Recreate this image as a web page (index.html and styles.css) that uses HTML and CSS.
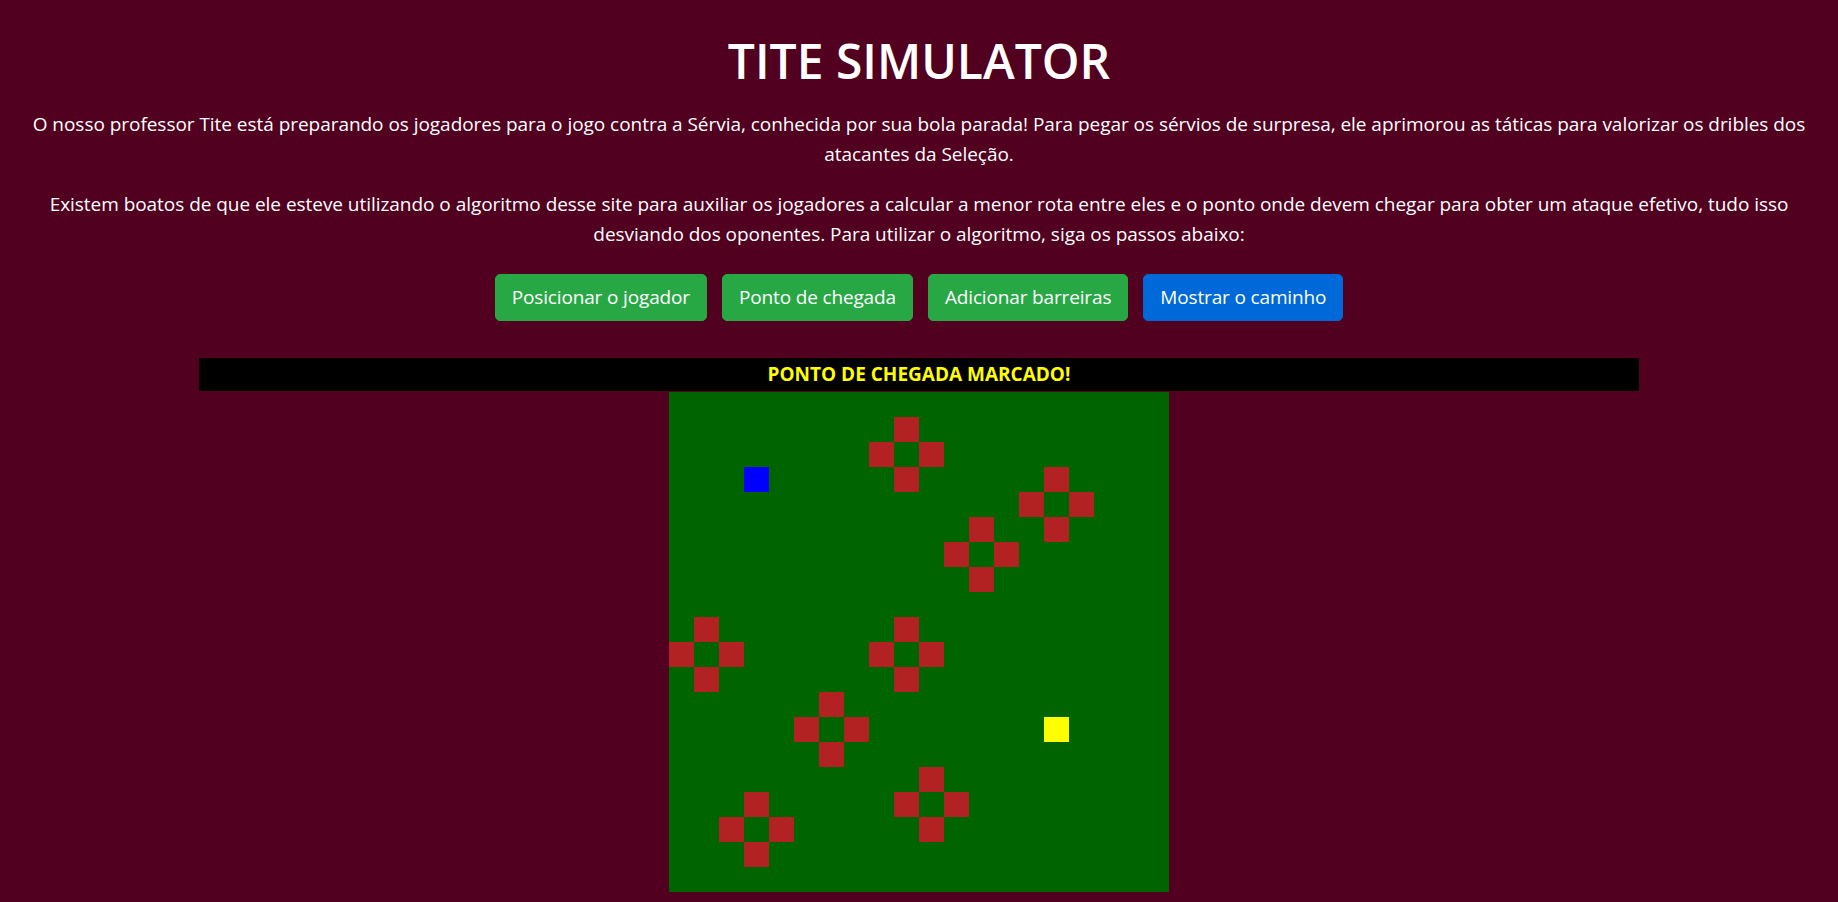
FILE: index.html
```html
<!DOCTYPE html>
<html lang="pt-BR">
<head>
<meta charset="utf-8">
<title>Tite Simulator</title>
<link rel="stylesheet" href="styles.css">
</head>
<body>
<main class="page">
  <h1 class="title">TITE SIMULATOR</h1>
  <p class="intro">O nosso professor Tite está preparando os jogadores para o jogo contra a Sérvia, conhecida por sua bola parada! Para pegar os sérvios de surpresa, ele aprimorou as táticas para valorizar os dribles dos atacantes da Seleção.</p>
  <p class="intro intro-last">Existem boatos de que ele esteve utilizando o algoritmo desse site para auxiliar os jogadores a calcular a menor rota entre eles e o ponto onde devem chegar para obter um ataque efetivo, tudo isso desviando dos oponentes. Para utilizar o algoritmo, siga os passos abaixo:</p>
  <div class="actions">
    <button class="btn btn-green" type="button">Posicionar o jogador</button>
    <button class="btn btn-green" type="button">Ponto de chegada</button>
    <button class="btn btn-green" type="button">Adicionar barreiras</button>
    <button class="btn btn-blue" type="button">Mostrar o caminho</button>
  </div>
  <div class="status">PONTO DE CHEGADA MARCADO!</div>
  <div class="board">
<i></i><i></i><i></i><i></i><i></i><i></i><i></i><i></i><i></i><i></i><i></i><i></i><i></i><i></i><i></i><i></i><i></i><i></i><i></i><i></i>
<i></i><i></i><i></i><i></i><i></i><i></i><i></i><i></i><i></i><i class="w"></i><i></i><i></i><i></i><i></i><i></i><i></i><i></i><i></i><i></i><i></i>
<i></i><i></i><i></i><i></i><i></i><i></i><i></i><i></i><i class="w"></i><i></i><i class="w"></i><i></i><i></i><i></i><i></i><i></i><i></i><i></i><i></i><i></i>
<i></i><i></i><i></i><i class="p"></i><i></i><i></i><i></i><i></i><i></i><i class="w"></i><i></i><i></i><i></i><i></i><i></i><i class="w"></i><i></i><i></i><i></i><i></i>
<i></i><i></i><i></i><i></i><i></i><i></i><i></i><i></i><i></i><i></i><i></i><i></i><i></i><i></i><i class="w"></i><i></i><i class="w"></i><i></i><i></i><i></i>
<i></i><i></i><i></i><i></i><i></i><i></i><i></i><i></i><i></i><i></i><i></i><i></i><i class="w"></i><i></i><i></i><i class="w"></i><i></i><i></i><i></i><i></i>
<i></i><i></i><i></i><i></i><i></i><i></i><i></i><i></i><i></i><i></i><i></i><i class="w"></i><i></i><i class="w"></i><i></i><i></i><i></i><i></i><i></i><i></i>
<i></i><i></i><i></i><i></i><i></i><i></i><i></i><i></i><i></i><i></i><i></i><i></i><i class="w"></i><i></i><i></i><i></i><i></i><i></i><i></i><i></i>
<i></i><i></i><i></i><i></i><i></i><i></i><i></i><i></i><i></i><i></i><i></i><i></i><i></i><i></i><i></i><i></i><i></i><i></i><i></i><i></i>
<i></i><i class="w"></i><i></i><i></i><i></i><i></i><i></i><i></i><i></i><i class="w"></i><i></i><i></i><i></i><i></i><i></i><i></i><i></i><i></i><i></i><i></i>
<i class="w"></i><i></i><i class="w"></i><i></i><i></i><i></i><i></i><i></i><i class="w"></i><i></i><i class="w"></i><i></i><i></i><i></i><i></i><i></i><i></i><i></i><i></i><i></i>
<i></i><i class="w"></i><i></i><i></i><i></i><i></i><i></i><i></i><i></i><i class="w"></i><i></i><i></i><i></i><i></i><i></i><i></i><i></i><i></i><i></i><i></i>
<i></i><i></i><i></i><i></i><i></i><i></i><i class="w"></i><i></i><i></i><i></i><i></i><i></i><i></i><i></i><i></i><i></i><i></i><i></i><i></i><i></i>
<i></i><i></i><i></i><i></i><i></i><i class="w"></i><i></i><i class="w"></i><i></i><i></i><i></i><i></i><i></i><i></i><i></i><i class="g"></i><i></i><i></i><i></i><i></i>
<i></i><i></i><i></i><i></i><i></i><i></i><i class="w"></i><i></i><i></i><i></i><i></i><i></i><i></i><i></i><i></i><i></i><i></i><i></i><i></i><i></i>
<i></i><i></i><i></i><i></i><i></i><i></i><i></i><i></i><i></i><i></i><i class="w"></i><i></i><i></i><i></i><i></i><i></i><i></i><i></i><i></i><i></i>
<i></i><i></i><i></i><i class="w"></i><i></i><i></i><i></i><i></i><i></i><i class="w"></i><i></i><i class="w"></i><i></i><i></i><i></i><i></i><i></i><i></i><i></i><i></i>
<i></i><i></i><i class="w"></i><i></i><i class="w"></i><i></i><i></i><i></i><i></i><i></i><i class="w"></i><i></i><i></i><i></i><i></i><i></i><i></i><i></i><i></i><i></i>
<i></i><i></i><i></i><i class="w"></i><i></i><i></i><i></i><i></i><i></i><i></i><i></i><i></i><i></i><i></i><i></i><i></i><i></i><i></i><i></i><i></i>
<i></i><i></i><i></i><i></i><i></i><i></i><i></i><i></i><i></i><i></i><i></i><i></i><i></i><i></i><i></i><i></i><i></i><i></i><i></i><i></i>
  </div>
</main>
</body>
</html>
```

FILE: styles.css
```css
html, body {
  margin: 0;
  padding: 0;
}

body {
  background: #52001f;
  color: #ffffff;
  font-family: "Open Sans", "Noto Sans", "DejaVu Sans", sans-serif;
}

.page {
  padding: 31px 15px 0;
  text-align: center;
}

.title {
  margin: 0 0 18px;
  font-size: 48px;
  line-height: 60px;
  font-weight: 600;
}

.intro {
  margin: 0 0 20px;
  font-size: 19px;
  line-height: 30px;
  letter-spacing: -0.04px;
}

.intro-last {
  margin-bottom: 25px;
}

.actions {
  display: flex;
  justify-content: center;
  gap: 15px;
}

.btn {
  font-family: inherit;
  font-size: 19px;
  line-height: 29px;
  letter-spacing: -0.15px;
  padding: 8px 16px;
  border: 1px solid transparent;
  border-radius: 5px;
  color: #ffffff;
  cursor: pointer;
}

.btn-green {
  background: #28a745;
  border-color: #28a745;
}

.btn-blue {
  background: #0069d9;
  border-color: #0069d9;
}

.status {
  width: 1440px;
  margin: 37px auto 0;
  background: #000000;
  color: #ffff00;
  font-size: 19px;
  font-weight: 700;
  line-height: 33px;
}

.board {
  width: 500px;
  height: 500px;
  margin: 1px auto 0;
  display: grid;
  grid-template-columns: repeat(20, 25px);
  grid-auto-rows: 25px;
  background: #006400;
}

.board i {
  display: block;
}

.board .w {
  background: #b22222;
}

.board .p {
  background: #0000ff;
}

.board .g {
  background: #ffff00;
}
```
